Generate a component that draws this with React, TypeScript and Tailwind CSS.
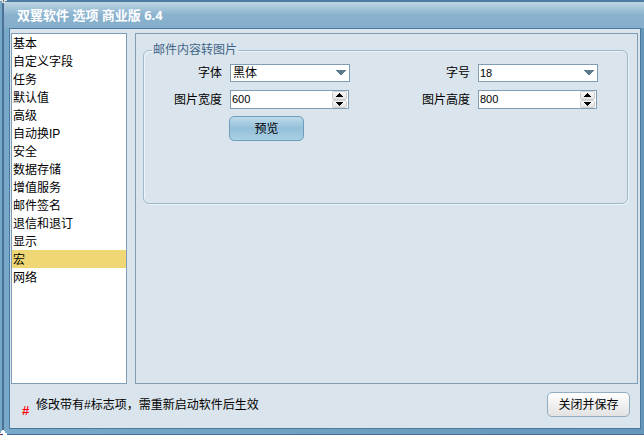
import React, { useState } from "react";

const sections = [
  "基本",
  "自定义字段",
  "任务",
  "默认值",
  "高级",
  "自动换IP",
  "安全",
  "数据存储",
  "增值服务",
  "邮件签名",
  "退信和退订",
  "显示",
  "宏",
  "网络",
];

function SelectField({
  id,
  label,
  options,
  className,
}: {
  id: string;
  label: string;
  options: string[];
  className: string;
}) {
  return (
    <div className="flex items-center gap-2">
      <label htmlFor={id} className="w-[78px] text-right">
        {label}
      </label>
      <div className="relative w-[120px]">
        <select
          id={id}
          className={
            "block h-[18px] w-full appearance-none border border-[#7f9db4] bg-white leading-4 outline-none " +
            className
          }
        >
          {options.map((o) => (
            <option key={o}>{o}</option>
          ))}
        </select>
        <svg
          className="pointer-events-none absolute top-1.5 right-1 h-[5px] w-[10px]"
          viewBox="0 0 10 5"
          fill="#5c7a8e"
        >
          <path d="M0 0h10v1H9v1H8v1H7v1H6v1H4V4H3V3H2V2H1V1H0z" />
        </svg>
      </div>
    </div>
  );
}

function NumberField({
  id,
  label,
  initial,
}: {
  id: string;
  label: string;
  initial: number;
}) {
  const [value, setValue] = useState(initial);
  const step =
    "flex flex-1 items-center justify-center rounded-xs border border-[#cfcfcf] bg-linear-to-b from-[#fafafa] to-[#e2e2e2]";

  return (
    <div className="flex items-center gap-2">
      <label htmlFor={id} className="w-[78px] text-right">
        {label}
      </label>
      <div className="w-[120px]">
        <div className="flex h-[19px] w-[119px] border border-[#7f9db4] bg-white pr-px">
          <input
            id={id}
            value={value}
            onChange={(e) => setValue(Number(e.target.value) || 0)}
            className="h-[15px] min-w-0 flex-1 pl-px text-[11px] outline-none"
          />
          <div className="flex w-[15px] flex-col">
            <button
              aria-label="增加"
              className={step}
              onClick={() => setValue(value + 1)}
            >
              <svg className="h-1 w-[7px]" viewBox="0 0 7 4">
                <path d="M0 4V3h1V2h1V1h1V0h1v1h1v1h1v1h1v1z" />
              </svg>
            </button>
            <button
              aria-label="减少"
              className={step}
              onClick={() => setValue(value - 1)}
            >
              <svg className="h-1 w-[7px]" viewBox="0 0 7 4">
                <path d="M0 0v1h1v1h1v1h1v1h1V3h1V2h1V1h1V0z" />
              </svg>
            </button>
          </div>
        </div>
      </div>
    </div>
  );
}

export default function App() {
  const [active, setActive] = useState("宏");

  return (
    <div className="relative flex min-h-screen flex-col border-b border-[#44709a] bg-[#78a8c8] pl-0.5 font-['Liberation_Sans','Noto_Sans_CJK_SC',sans-serif] text-xs leading-4 text-black">
      <div className="flex flex-1 flex-col border-l-2 border-l-[#4a7299] bg-[#6b9cbd] bg-linear-to-r from-[#79a9c8] to-[#6497ba] pr-[3px] pb-[5px]">
        <header className="-mr-[3px] flex h-7 items-center border-t-2 border-[#4c7ca3] bg-linear-to-b from-[#bed5e3] via-[#8ab2ce] to-[#84aecb] pl-[13px]">
          <h1 className="font-['Noto_Sans','Noto_Sans_CJK_SC',sans-serif] text-[13px] font-bold text-white">
            双翼软件 选项 商业版 6.4
          </h1>
        </header>

        <div className="ml-[5px] flex flex-1 flex-col border border-[#4c78a0] bg-[#dae4ec] px-px pt-1">
          <div className="flex flex-1 gap-2 pr-px">
            <nav className="w-[116px] border border-[#7f9db4] bg-white">
              <ul>
                {sections.map((s) => (
                  <li key={s}>
                    <button
                      onClick={() => setActive(s)}
                      className={
                        "block h-[18px] w-full pt-0.5 pl-px text-left " +
                        (s === active ? "bg-[#efd775]" : "")
                      }
                    >
                      {s}
                    </button>
                  </li>
                ))}
              </ul>
            </nav>

            <main className="flex-1 border border-[#7f9db4] pt-2 pr-[9px] pl-[7px]">
              <fieldset className="h-[162px] rounded-md border border-[#9dbacd] shadow-[inset_1px_1px_0_#edf3f7,1px_1px_0_#edf3f7]">
                <legend className="ml-2 bg-[#dae4ec] px-px text-[#3f6688]">
                  邮件内容转图片
                </legend>
                <div className="flex flex-col pt-1.5 pr-[29px]">
                  <div className="mb-2 flex justify-between">
                    <SelectField
                      id="font"
                      label="字体"
                      options={["黑体", "宋体"]}
                      className="pl-0.5"
                    />
                    <SelectField
                      id="size"
                      label="字号"
                      options={["18", "20", "24"]}
                      className="pl-px text-[11px]"
                    />
                  </div>
                  <div className="mb-[7px] flex justify-between">
                    <NumberField id="width" label="图片宽度" initial={600} />
                    <NumberField id="height" label="图片高度" initial={800} />
                  </div>
                  <button className="ml-[85px] h-[25px] w-[75px] rounded-[5px] border border-[#6f9dbd] bg-linear-to-b from-[#bddbea] via-[#93bfd9] to-[#a9d0e4]">
                    预览
                  </button>
                </div>
              </fieldset>
            </main>
          </div>

          <footer className="flex h-11 items-start pt-2 pr-[9px] pl-[11px]">
            <span className="mt-[11px] w-3.5 text-[13px] font-bold text-[#f00]">
              #
            </span>
            <p className="mt-[5px] flex-1">
              修改带有#标志项，需重新启动软件后生效
            </p>
            <button className="h-[25px] w-[83px] rounded-[5px] border border-[#90adc1] bg-linear-to-b from-white via-[#f0f0f0] to-[#e2e2e2]">
              关闭并保存
            </button>
          </footer>
        </div>
      </div>

      {/* corner marks */}
      <svg className="absolute top-0 left-0 h-1 w-[7px]" viewBox="0 0 7 4">
        <path d="M0 0h7v1H5v2H2V1H0z" fill="#e6e4e0" />
        <path d="M3 0h1v2H3z" fill="#777" />
      </svg>
      <svg className="absolute -bottom-px left-0 h-[5px] w-[7px]" viewBox="0 0 7 5">
        <path d="M2 0h2v1h1v2h2v2H0V3h1V1h1z" fill="#fff" />
        <path d="M0 4h1v1H0z" fill="#e02020" />
        <path d="M1 4h2v1H1z" fill="#203080" />
      </svg>
    </div>
  );
}
